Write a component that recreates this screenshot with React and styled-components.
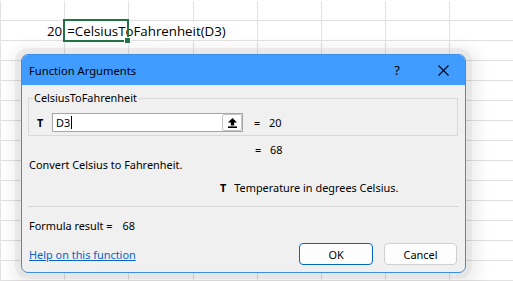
import React from "react";
import styled, { createGlobalStyle } from "styled-components";

const GlobalStyle = createGlobalStyle`
  html, body {
    margin: 0;
    padding: 0;
    background: #fff;
  }
  body {
    width: 513px;
    height: 281px;
    overflow: hidden;
    font-family: "Noto Sans", "Open Sans", sans-serif;
  }
`;

const Screen = styled.div`
  position: relative;
  width: 513px;
  height: 281px;
  overflow: hidden;
  background: #fff;
`;

const Sheet = styled.div`
  display: grid;
  grid-template-columns: repeat(8, 64.2px);
  grid-auto-rows: 20px;
  padding-top: 1px;
  font-family: "Open Sans", "Noto Sans", sans-serif;
  font-size: 13.3px;
  color: #000;
`;

const Cell = styled.div`
  position: relative;
  box-sizing: border-box;
  border-left: 1px solid #e1e1e1;
  border-bottom: 1px solid #e1e1e1;
  display: flex;
  align-items: center;
  justify-content: ${(p) => (p.$right ? "flex-end" : "flex-start")};
  padding: 0 2px;
  white-space: nowrap;
  z-index: ${(p) => (p.$over ? 2 : 0)};
`;

const Overflow = styled.span`
  background: #fff;
  padding-right: 4px;
  line-height: 18px;
`;

const Selection = styled.div`
  position: absolute;
  left: -2px;
  top: -2px;
  right: -1px;
  bottom: -2px;
  border: 2px solid #217346;
  z-index: 3;

  &::after {
    content: "";
    position: absolute;
    right: -4px;
    bottom: -4px;
    width: 5px;
    height: 5px;
    background: #217346;
    border: 1px solid #fff;
  }
`;

const Dialog = styled.div`
  position: absolute;
  left: 21px;
  top: 54px;
  width: 445px;
  height: 219px;
  box-sizing: border-box;
  border: 1px solid #3d8fe6;
  border-radius: 7px;
  background: #f0f0f0;
  box-shadow: 0 0 0 6px rgba(0, 0, 0, 0.045), 2px 4px 14px 12px rgba(0, 0, 0, 0.06);
  display: flex;
  flex-direction: column;
  overflow: hidden;
  font-family: "Noto Sans", "Open Sans", sans-serif;
  font-size: 10.9px;
  color: #000;
`;

const TitleBar = styled.div`
  height: 30px;
  flex-shrink: 0;
  background: #409cff;
  display: flex;
  align-items: center;
  padding-left: 8px;
  margin: -1px -1px 0;
  padding-top: 1px;
`;

const Title = styled.div`
  flex: 1;
  font-size: 11.2px;
`;

const Caption = styled.div`
  width: 46px;
  height: 30px;
  display: flex;
  align-items: center;
  justify-content: center;
  font-size: 13px;
`;

const Body = styled.div`
  flex: 1;
  display: flex;
  flex-direction: column;
  padding: 5px 7px 0 6px;
`;

const Group = styled.fieldset`
  margin: 0;
  border: 1px solid #d9d9d9;
  padding: 0 0 3px 4px;
`;

const Legend = styled.legend`
  padding: 0 1px;
  line-height: 16px;
`;

const ArgRow = styled.div`
  display: flex;
  align-items: center;
  margin-top: 7px;
  height: 19px;
`;

const ArgLabel = styled.div`
  width: 19px;
  box-sizing: border-box;
  padding-left: 4px;
  font-weight: 700;
`;

const Input = styled.div`
  width: 191px;
  height: 19px;
  box-sizing: border-box;
  border: 1px solid #a6a6a6;
  background: #fff;
  display: flex;
  align-items: center;
  padding-left: 3px;
`;

const Caret = styled.span`
  display: inline-block;
  width: 1px;
  height: 13px;
  margin-left: 1px;
  background: #000;
`;

const PickButton = styled.div`
  margin-left: auto;
  width: 20px;
  height: 17px;
  box-sizing: border-box;
  border: 1px solid #c4c4c4;
  border-radius: 2px;
  background: #fdfdfd;
  display: flex;
  align-items: center;
  justify-content: center;
`;

const Equals = styled.span`
  margin-left: ${(p) => (p.$flush ? 0 : 11)}px;
  width: 15px;
`;

const ResultRow = styled.div`
  display: flex;
  align-items: center;
  height: 16px;
  margin-top: 5px;
  padding-left: 227px;
`;

const Line = styled.div`
  height: 16px;
  line-height: 16px;
  margin-top: ${(p) => p.$gap || 0}px;
  padding-left: ${(p) => p.$indent || 1}px;
  white-space: nowrap;
`;

const Bold = styled.span`
  font-weight: 700;
  margin-right: 8px;
`;

const Separator = styled.div`
  height: 1px;
  background: #d6d6d6;
  margin-top: 10px;
  margin-right: -1px;
`;

const Value = styled.span`
  margin-left: 10px;
`;

const Footer = styled.div`
  display: flex;
  align-items: center;
  margin-top: 9px;
  gap: 11px;
  padding-right: 1px;
`;

const HelpLink = styled.a`
  margin-right: auto;
  color: #0a64c8;
  text-decoration: underline;
  padding-left: 1px;
  cursor: pointer;
`;

const Button = styled.button`
  width: ${(p) => (p.$primary ? 74 : 73)}px;
  height: 22px;
  box-sizing: border-box;
  border: 1px solid ${(p) => (p.$primary ? "#0067c0" : "#d0d0d0")};
  border-radius: 4px;
  background: #fdfdfd;
  font: inherit;
  color: #000;
  padding: 0;
`;

const UpArrow = () => (
  <svg width="9" height="10" viewBox="0 0 9 10">
    <path d="M4.5 0 L9 4.5 H6.2 V7.4 H2.8 V4.5 H0 Z" fill="#000" />
    <rect x="0" y="8.4" width="9" height="1.6" fill="#000" />
  </svg>
);

const CloseIcon = () => (
  <svg width="11" height="11" viewBox="0 0 11 11">
    <path d="M0.5 0.5 L10.5 10.5 M10.5 0.5 L0.5 10.5" stroke="#000" strokeWidth="1.1" />
  </svg>
);

const ROWS = 14;
const COLS = 8;

export default function App() {
  const cells = [];
  for (let r = 0; r < ROWS; r++) {
    for (let c = 0; c < COLS; c++) {
      if (r === 1 && c === 0) {
        cells.push(
          <Cell key={`${r}-${c}`} $right>
            20
          </Cell>
        );
      } else if (r === 1 && c === 1) {
        cells.push(
          <Cell key={`${r}-${c}`} $over>
            <Overflow>=CelsiusToFahrenheit(D3)</Overflow>
            <Selection />
          </Cell>
        );
      } else {
        cells.push(<Cell key={`${r}-${c}`} />);
      }
    }
  }

  return (
    <Screen>
      <GlobalStyle />
      <Sheet>{cells}</Sheet>
      <Dialog>
        <TitleBar>
          <Title>Function Arguments</Title>
          <Caption>?</Caption>
          <Caption>
            <CloseIcon />
          </Caption>
        </TitleBar>
        <Body>
          <Group>
            <Legend>CelsiusToFahrenheit</Legend>
            <ArgRow>
              <ArgLabel>T</ArgLabel>
              <Input>
                D3
                <Caret />
                <PickButton>
                  <UpArrow />
                </PickButton>
              </Input>
              <Equals>=</Equals>
              <span>20</span>
            </ArgRow>
          </Group>
          <ResultRow>
            <Equals $flush>=</Equals>
            <span>68</span>
          </ResultRow>
          <Line>Convert Celsius to Fahrenheit.</Line>
          <Line $gap={7} $indent={192}>
            <Bold>T</Bold>Temperature in degrees Celsius.
          </Line>
          <Separator />
          <Line $gap={11}>
            Formula result =<Value>68</Value>
          </Line>
          <Footer>
            <HelpLink>Help on this function</HelpLink>
            <Button $primary>OK</Button>
            <Button>Cancel</Button>
          </Footer>
        </Body>
      </Dialog>
    </Screen>
  );
}
